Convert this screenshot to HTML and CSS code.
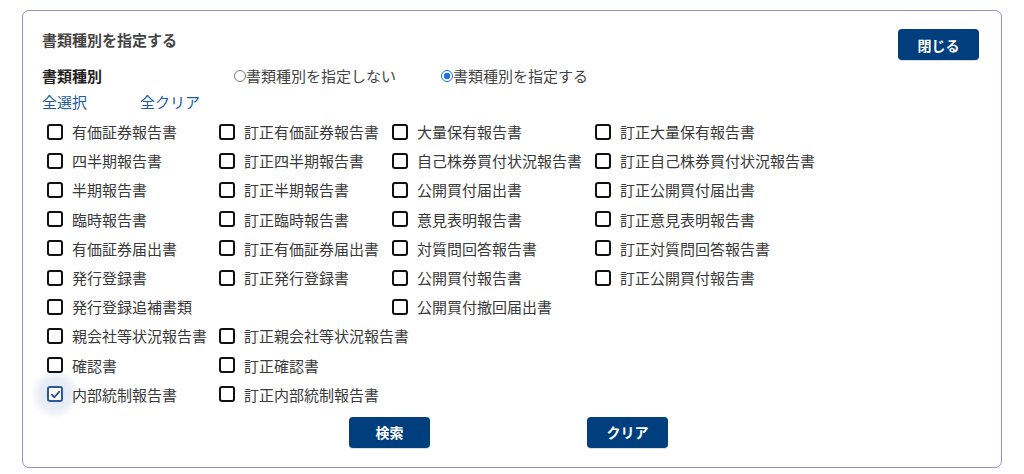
FILE: index.html
```html
<!DOCTYPE html>
<html lang="ja">
<head>
<meta charset="utf-8">
<title>書類種別を指定する</title>
<link rel="stylesheet" href="styles.css">
</head>
<body>
<div class="panel">
  <div class="header">
    <div class="title">書類種別を指定する</div>
    <button class="btn">閉じる</button>
  </div>
  <div class="type-row">
    <div class="label">書類種別</div>
    <label class="radio"><span class="dot"></span>書類種別を指定しない</label>
    <label class="radio on"><span class="dot"></span>書類種別を指定する</label>
  </div>
  <div class="links">
    <a class="link">全選択</a>
    <a class="link">全クリア</a>
  </div>
  <div class="grid">
    <div class="item"><span class="cb"></span>有価証券報告書</div>
    <div class="item"><span class="cb"></span>訂正有価証券報告書</div>
    <div class="item"><span class="cb"></span>大量保有報告書</div>
    <div class="item"><span class="cb"></span>訂正大量保有報告書</div>

    <div class="item"><span class="cb"></span>四半期報告書</div>
    <div class="item"><span class="cb"></span>訂正四半期報告書</div>
    <div class="item"><span class="cb"></span>自己株券買付状況報告書</div>
    <div class="item"><span class="cb"></span>訂正自己株券買付状況報告書</div>

    <div class="item"><span class="cb"></span>半期報告書</div>
    <div class="item"><span class="cb"></span>訂正半期報告書</div>
    <div class="item"><span class="cb"></span>公開買付届出書</div>
    <div class="item"><span class="cb"></span>訂正公開買付届出書</div>

    <div class="item"><span class="cb"></span>臨時報告書</div>
    <div class="item"><span class="cb"></span>訂正臨時報告書</div>
    <div class="item"><span class="cb"></span>意見表明報告書</div>
    <div class="item"><span class="cb"></span>訂正意見表明報告書</div>

    <div class="item"><span class="cb"></span>有価証券届出書</div>
    <div class="item"><span class="cb"></span>訂正有価証券届出書</div>
    <div class="item"><span class="cb"></span>対質問回答報告書</div>
    <div class="item"><span class="cb"></span>訂正対質問回答報告書</div>

    <div class="item"><span class="cb"></span>発行登録書</div>
    <div class="item"><span class="cb"></span>訂正発行登録書</div>
    <div class="item"><span class="cb"></span>公開買付報告書</div>
    <div class="item"><span class="cb"></span>訂正公開買付報告書</div>

    <div class="item"><span class="cb"></span>発行登録追補書類</div>
    <div class="item"></div>
    <div class="item"><span class="cb"></span>公開買付撤回届出書</div>
    <div class="item"></div>

    <div class="item"><span class="cb"></span>親会社等状況報告書</div>
    <div class="item"><span class="cb"></span>訂正親会社等状況報告書</div>
    <div class="item"></div>
    <div class="item"></div>

    <div class="item"><span class="cb"></span>確認書</div>
    <div class="item"><span class="cb"></span>訂正確認書</div>
    <div class="item"></div>
    <div class="item"></div>

    <div class="item"><span class="cb checked"><svg viewBox="0 0 12 12" width="11" height="11"><path d="M2 6.2 L4.8 9 L10 3" fill="none" stroke="#1f4f8f" stroke-width="2" stroke-linecap="round" stroke-linejoin="round"/></svg></span>内部統制報告書</div>
    <div class="item"><span class="cb"></span>訂正内部統制報告書</div>
    <div class="item"></div>
    <div class="item"></div>
  </div>
  <div class="actions">
    <button class="btn">検索</button>
    <button class="btn">クリア</button>
  </div>
</div>
</body>
</html>
```

FILE: styles.css
```css
* { box-sizing: border-box; }

body {
  margin: 0;
  background: #ffffff;
  font-family: "Noto Sans CJK JP", "Noto Sans", sans-serif;
  color: #333333;
}

.panel {
  margin: 10px 0 0 22px;
  width: 980px;
  height: 458px;
  border: 1px solid #8f8fd4;
  border-radius: 7px;
  padding: 18px 22px 0 19px;
}

.header {
  display: flex;
  justify-content: space-between;
  align-items: flex-start;
}

.title {
  font-size: 15px;
  line-height: 22px;
  font-weight: 700;
  color: #444444;
}

.btn {
  width: 81px;
  height: 31px;
  border: none;
  border-radius: 4px;
  background: #003e7e;
  color: #ffffff;
  font-family: "Noto Sans CJK JP", sans-serif;
  font-size: 14px;
  font-weight: 700;
  padding: 0;
  box-shadow: 0 1px 1px rgba(0,0,0,0.15);
}

.type-row {
  display: flex;
  align-items: center;
  margin-top: 5px;
  height: 22px;
}

.label {
  width: 192px;
  font-size: 15px;
  font-weight: 700;
  color: #222222;
  line-height: 22px;
}

.radio {
  display: flex;
  align-items: center;
  font-size: 15px;
  line-height: 22px;
  color: #444444;
  margin-right: 45px;
}

.dot {
  width: 12px;
  height: 12px;
  border: 1px solid #777777;
  border-radius: 50%;
}

.radio.on .dot {
  border: 1.5px solid #1a73e8;
  background: radial-gradient(circle, #1a73e8 0 3px, #ffffff 3.5px);
}

.links {
  display: flex;
  margin-top: 4px;
  height: 22px;
  align-items: center;
}

.link {
  font-size: 15px;
  line-height: 22px;
  color: #1d5c9c;
  width: 98px;
}

.grid {
  margin-top: 4px;
  display: grid;
  grid-template-columns: 172px 173px 203px auto;
  grid-auto-rows: 29.2px;
  padding-left: 5px;
}

.item {
  display: flex;
  align-items: center;
  white-space: nowrap;
  font-size: 15px;
  color: #3a3a3a;
}

.cb {
  position: relative;
  width: 16px;
  height: 16px;
  border: 2px solid #111111;
  border-radius: 3px;
  margin-right: 9px;
  flex: none;
  display: flex;
  align-items: center;
  justify-content: center;
  background: #ffffff;
}

.cb.checked {
  border-color: #2a5a98;
}

.cb.checked::before {
  content: "";
  position: absolute;
  left: 50%;
  top: 50%;
  width: 50px;
  height: 50px;
  margin: -25px 0 0 -25px;
  border-radius: 50%;
  background: radial-gradient(circle, rgba(60,100,170,0.18) 0, rgba(60,100,170,0.11) 45%, rgba(60,100,170,0) 70%);
  z-index: -1;
}

.actions {
  display: flex;
  justify-content: center;
  gap: 157px;
  margin-top: 8px;
  padding-right: 4px;
}
```
